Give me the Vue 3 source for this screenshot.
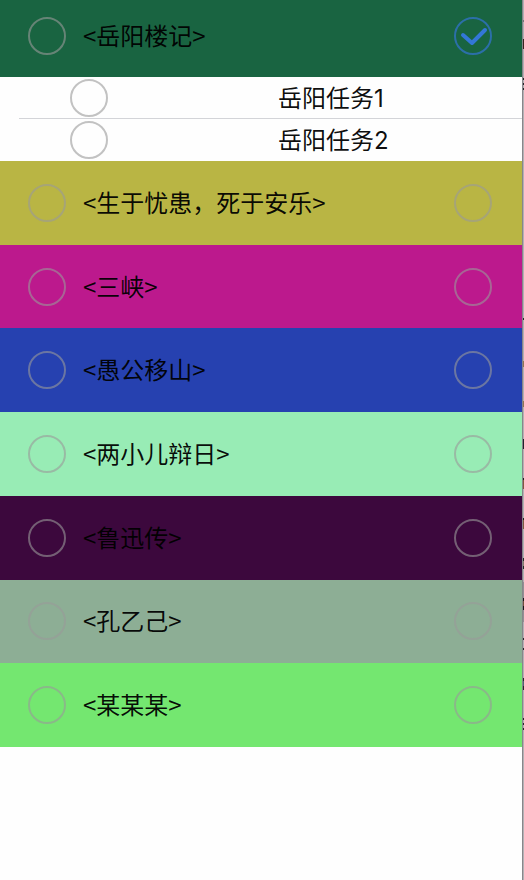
<script setup>
import { reactive } from 'vue'

const current = reactive({ title: '<岳阳楼记>', color: '#196441', picked: false, done: true })

const tasks = reactive([
  { name: '岳阳任务1', done: false },
  { name: '岳阳任务2', done: false }
])

const lessons = reactive([
  { title: '<生于忧患，死于安乐>', color: '#b9b544', picked: false, done: false },
  { title: '<三峡>', color: '#bc198d', picked: false, done: false },
  { title: '<愚公移山>', color: '#2641b0', picked: false, done: false },
  { title: '<两小儿辩日>', color: '#98ecb5', picked: false, done: false },
  { title: '<鲁迅传>', color: '#3c083d', picked: false, done: false },
  { title: '<孔乙己>', color: '#8dae95', picked: false, done: false },
  { title: '<某某某>', color: '#74e770', picked: false, done: false }
])

// Slivers of the page behind the panel: top, height, colour
const slivers = [
  [20, 2, '#77757a'], [39, 10, '#3a2420'], [78, 2, '#29282c'], [83, 2, '#29282c'],
  [88, 2, '#29282c'], [318, 2, '#29282c'], [361, 6, '#8d7355'], [401, 6, '#8d7355'],
  [439, 10, '#20242c'], [478, 2, '#222222'], [480, 9, '#80583f'], [518, 2, '#222222'],
  [520, 9, '#80583f'], [558, 3, '#29282c'], [561, 5, '#8a7a70'], [566, 3, '#29282c'],
  [582, 40, '#929094'], [598, 3, '#17171b'], [601, 5, '#70513d'], [606, 4, '#17171b'],
  [638, 2, '#29282c'], [648, 2, '#29282c'], [678, 3, '#29282c'], [681, 5, '#4e6675'],
  [686, 4, '#29282c'], [718, 2, '#29282c'], [723, 2, '#29282c'], [728, 2, '#29282c']
]
</script>

<template>
  <div class="screen">
    <main class="panel">
      <section class="row row-first" :style="{ backgroundColor: current.color }">
        <label class="title">
          <span class="tick">
            <input v-model="current.picked" type="checkbox">
            <svg v-if="current.picked" viewBox="0 0 38 38" aria-hidden="true"><path d="M9 18 L18 26 L31 13" /></svg>
          </span>
          <span class="title-text">{{ current.title }}</span>
        </label>
        <span class="tick">
          <input v-model="current.done" type="checkbox" :aria-label="current.title">
          <svg v-if="current.done" viewBox="0 0 38 38" aria-hidden="true"><path d="M9 18 L18 26 L31 13" /></svg>
        </span>
      </section>

      <ul class="tasks">
        <li v-for="task in tasks" :key="task.name">
          <label class="task">
            <span class="tick">
              <input v-model="task.done" type="checkbox">
              <svg v-if="task.done" viewBox="0 0 38 38" aria-hidden="true"><path d="M9 18 L18 26 L31 13" /></svg>
            </span>
            <span class="task-name">{{ task.name }}</span>
          </label>
        </li>
      </ul>

      <div class="lessons">
        <section
          v-for="lesson in lessons"
          :key="lesson.title"
          class="row"
          :style="{ backgroundColor: lesson.color }"
        >
          <label class="title">
            <span class="tick">
              <input v-model="lesson.picked" type="checkbox">
              <svg v-if="lesson.picked" viewBox="0 0 38 38" aria-hidden="true"><path d="M9 18 L18 26 L31 13" /></svg>
            </span>
            <span class="title-text">{{ lesson.title }}</span>
          </label>
          <span class="tick">
            <input v-model="lesson.done" type="checkbox" :aria-label="lesson.title">
            <svg v-if="lesson.done" viewBox="0 0 38 38" aria-hidden="true"><path d="M9 18 L18 26 L31 13" /></svg>
          </span>
        </section>
      </div>
    </main>

    <div class="edge" aria-hidden="true">
      <svg width="2" height="740" shape-rendering="crispEdges">
        <rect
          v-for="[top, height, fill] in slivers"
          :key="top"
          x="1"
          :y="top"
          width="1"
          :height="height"
          :fill="fill"
        />
      </svg>
    </div>
  </div>
</template>

<style>
body {
  margin: 0;
  background: #fefefe;
}
</style>

<style scoped>
.screen {
  display: flex;
  min-height: 100vh;
  color: rgba(0, 0, 0, 0.95);
  font-family: "Noto Sans CJK SC", sans-serif;
  font-size: 24px;
  line-height: 36px;
}

.panel {
  flex: 1;
  min-width: 0;
}

.row {
  display: flex;
  align-items: center;
  justify-content: space-between;
  box-sizing: border-box;
  padding: 0 30px 0 28px;
}

.row-first {
  min-height: 77px;
  padding-bottom: 6px;
}

.lessons {
  display: grid;
  grid-auto-rows: 1fr;
  min-height: 586px;
}

.title {
  display: flex;
  align-items: center;
  gap: 17px;
}

.title-text {
  padding-bottom: 2px;
}

.tick {
  position: relative;
  display: block;
  flex: none;
  width: 38px;
  height: 38px;
}

.tick input {
  display: block;
  box-sizing: border-box;
  width: 38px;
  height: 38px;
  margin: 0;
  border: 2px solid rgba(153, 153, 153, 0.6);
  border-radius: 50%;
  appearance: none;
  background: transparent;
}

.tick input:checked {
  border-color: #2b6fa8;
}

.tick svg {
  position: absolute;
  inset: 0;
  fill: none;
  stroke: #3377d8;
  stroke-width: 4;
  stroke-linecap: round;
  stroke-linejoin: round;
  pointer-events: none;
}

.tasks {
  margin: 0;
  padding: 0 0 0 19px;
  list-style: none;
}

.tasks li + li {
  border-top: 1px solid #d3d4d8;
}

.task {
  display: grid;
  grid-template-columns: 38px 1fr;
  column-gap: 170px;
  align-items: center;
  min-height: 41px;
  padding-left: 51px;
}

.tasks li + li .task {
  min-height: 42px;
}

.task-name {
  padding-top: 2px;
  font-family: Inter, "Noto Sans CJK SC", sans-serif;
}

.edge {
  flex: none;
  width: 2px;
  background: linear-gradient(to right, #88868a 1px, #b4b1b5 1px);
}

.edge svg {
  display: block;
}
</style>
